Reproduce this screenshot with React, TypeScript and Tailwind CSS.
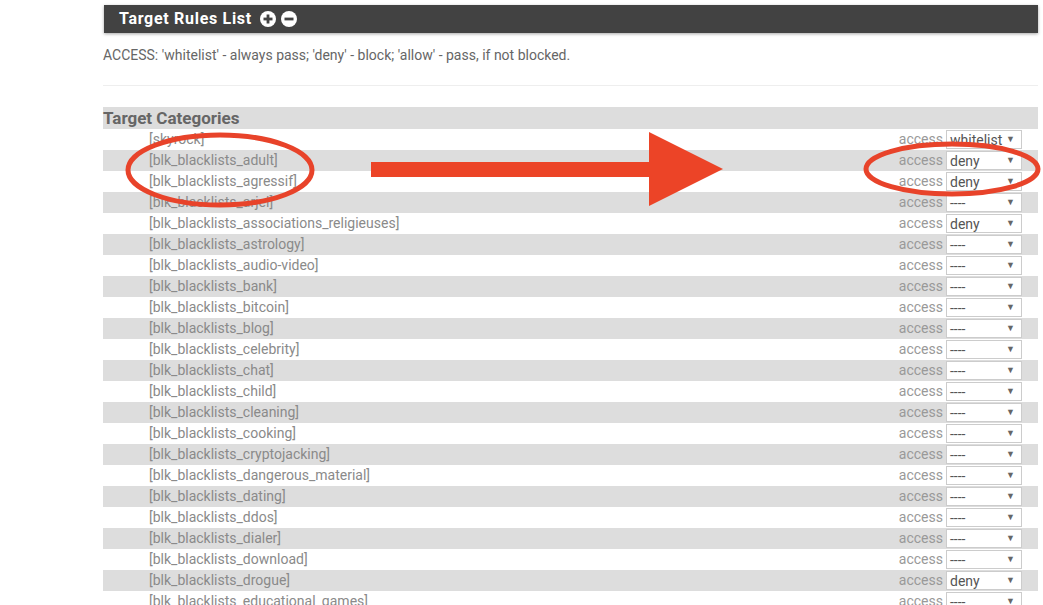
import { Fragment } from 'react'

const rows: [string, string][] = [
  ['skyrock', 'whitelist'],
  ['blk_blacklists_adult', 'deny'],
  ['blk_blacklists_agressif', 'deny'],
  ['blk_blacklists_arjel', '----'],
  ['blk_blacklists_associations_religieuses', 'deny'],
  ['blk_blacklists_astrology', '----'],
  ['blk_blacklists_audio-video', '----'],
  ['blk_blacklists_bank', '----'],
  ['blk_blacklists_bitcoin', '----'],
  ['blk_blacklists_blog', '----'],
  ['blk_blacklists_celebrity', '----'],
  ['blk_blacklists_chat', '----'],
  ['blk_blacklists_child', '----'],
  ['blk_blacklists_cleaning', '----'],
  ['blk_blacklists_cooking', '----'],
  ['blk_blacklists_cryptojacking', '----'],
  ['blk_blacklists_dangerous_material', '----'],
  ['blk_blacklists_dating', '----'],
  ['blk_blacklists_ddos', '----'],
  ['blk_blacklists_dialer', '----'],
  ['blk_blacklists_download', '----'],
  ['blk_blacklists_drogue', 'deny'],
  ['blk_blacklists_educational_games', '----'],
]

function CircleIcon({ plus }: { plus?: boolean }) {
  return (
    <svg width="16" height="16" viewBox="0 0 16 16">
      <circle cx="8" cy="8" r="8" fill="#fff" />
      <rect x="3.5" y="6.6" width="9" height="2.8" fill="#424242" />
      {plus && <rect x="6.6" y="3.5" width="2.8" height="9" fill="#424242" />}
    </svg>
  )
}

export default function App() {
  return (
    <div className="relative w-[1043px] h-[605px] overflow-hidden bg-white font-['Roboto',sans-serif]">
      <div className="ml-[103px] w-[935px] pt-[5px]">
        <div className="ml-px h-[28px] bg-[#424242] flex items-center gap-[5px] pl-[15px] shadow-[0_1px_3px_rgba(0,0,0,0.35)]">
          <span className="text-white font-bold text-[16px] tracking-[0.7px] mr-[3px]">Target Rules List</span>
          <CircleIcon plus />
          <CircleIcon />
        </div>

        <p className="mt-[12px] text-[14px] text-[#666] leading-[20px]">
          ACCESS: 'whitelist' - always pass; 'deny' - block; 'allow' - pass, if not blocked.
        </p>

        <div className="mt-[20px] border-t border-[#eee]" />

        <div className="mt-[21px] h-[22px] bg-[#dddddd] flex items-center">
          <span className="font-bold text-[17px] text-[#666] leading-[22px]">Target Categories</span>
        </div>

        <div>
          {rows.map(([name, val], i) => (
            <Fragment key={name}>
              <div
                className={`h-[21px] flex items-center text-[14px] text-[#8a8a8a] ${i % 2 === 1 ? 'bg-[#dddddd]' : 'bg-white'}`}
              >
                <span className="pl-[46px] flex-1">[{name}]</span>
                <span className="text-[#999] mr-[3px]">access</span>
                <div className="w-[76px] h-[19px] bg-white border border-[#cccccc] flex items-center justify-between pl-[3px] pr-[6px] mr-[16px] text-[#555]">
                  <span className="text-[14px] leading-none">{val}</span>
                  <span className="text-[9px] text-[#666]">▼</span>
                </div>
              </div>
            </Fragment>
          ))}
        </div>
      </div>

      <svg className="absolute inset-0 pointer-events-none" width="1043" height="605" viewBox="0 0 1043 605">
        <ellipse cx="220" cy="170" rx="92" ry="35" fill="none" stroke="#e8432a" strokeWidth="5" />
        <ellipse cx="952" cy="169" rx="86" ry="25" fill="none" stroke="#e8432a" strokeWidth="5" />
        <rect x="371" y="162" width="282" height="15" fill="#ec4427" />
        <polygon points="649,132 723,169 649,206" fill="#ec4427" />
      </svg>
    </div>
  )
}
